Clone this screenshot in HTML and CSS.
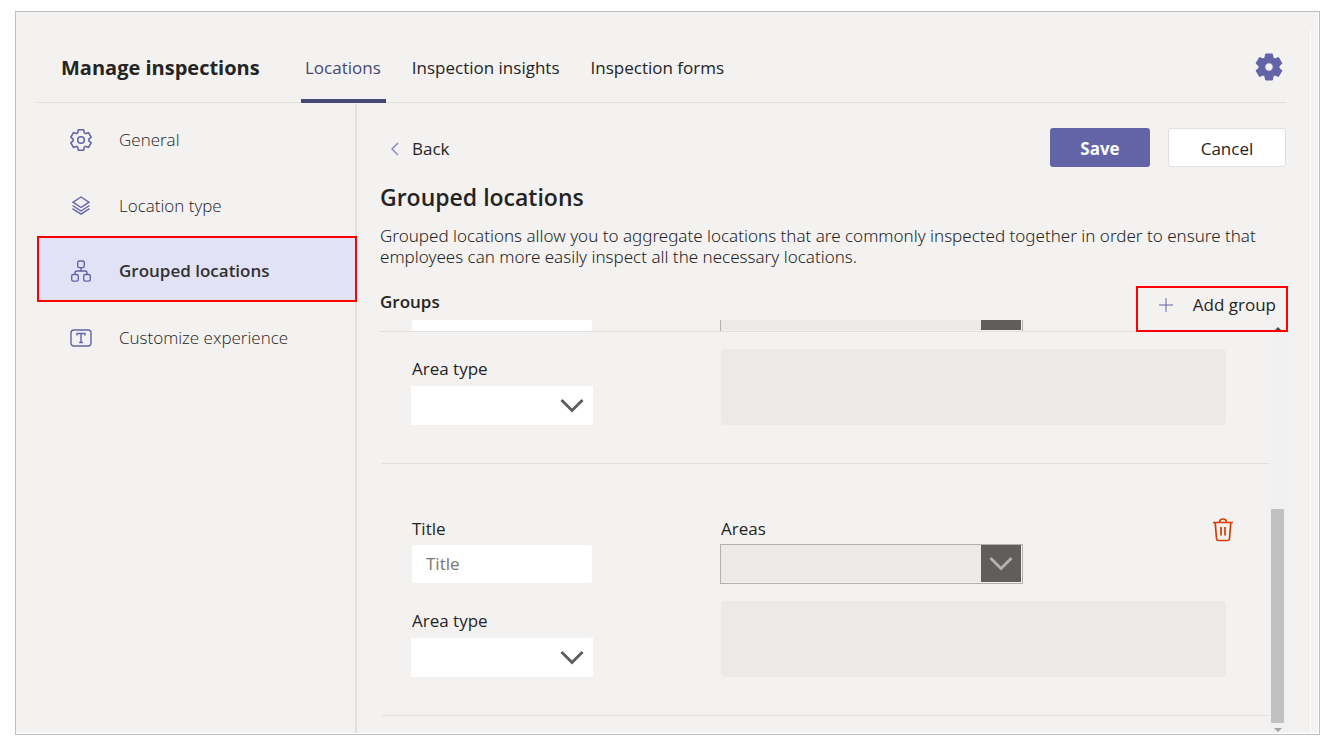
FILE: index.html
```html
<!DOCTYPE html>
<html lang="en">
<head>
<meta charset="utf-8">
<title>Manage inspections</title>
<link rel="stylesheet" href="styles.css">
</head>
<body>
<svg class="defs" width="0" height="0" aria-hidden="true">
  <symbol id="gear" viewBox="-14 -14 28 28">
    <path stroke-linejoin="round" d="M-4.1-9.2-3.4-13H3.4L4.1-9.2 5.9-8.100 9.56-9.45 12.96-3.55 10-1.050V1.050L12.96 3.55 9.56 9.45 5.9 8.100 4.1 9.2 3.4 13H-3.4L-4.1 9.2-5.9 8.100-9.56 9.45-12.96 3.55-10 1.050V-1.050L-12.96-3.55-9.56-9.45-5.9-8.100Z"/>
    <circle class="hub" r="4.2"/>
  </symbol>
  <symbol id="chevron" viewBox="0 0 24 16"><path d="M1.5 2 12 12.5 22.500 2"/></symbol>
</svg>
<div class="window">
  <div class="app">
    <header class="header">
      <h1 class="brand">Manage inspections</h1>
      <nav class="tabs">
        <a class="tab tab-active" href="#">Locations</a>
        <a class="tab" href="#">Inspection insights</a>
        <a class="tab" href="#">Inspection forms</a>
      </nav>
      <button class="settings" type="button" aria-label="Settings"><svg class="gear-solid"><use href="#gear"/></svg></button>
    </header>
    <div class="body">
      <nav class="sidebar">
        <a class="side-item" href="#"><svg class="side-icon gear-line"><use href="#gear"/></svg>General</a>
        <a class="side-item" href="#">
          <svg class="side-icon" viewBox="0 0 22 22"><path d="M11 2 19 7.200 11 12.500 3 7.200ZM2.500 10.500 11 16 19.500 10.500M2.500 13.700 11 19.200 19.500 13.700"/></svg>Location type</a>
        <a class="side-item side-active" href="#">
          <svg class="side-icon" viewBox="0 0 22 22"><rect x="7.700" y="1" width="6.600" height="6.600" rx="1.500"/><rect x="1.700" y="14.500" width="6.600" height="6.600" rx="1.500"/><rect x="13.700" y="14.500" width="6.600" height="6.600" rx="1.500"/><path d="M11 7.600V11M5 14.500V13q0-2 2-2H15q2 0 2 2V14.500"/></svg>Grouped locations</a>
        <a class="side-item" href="#">
          <svg class="side-icon" viewBox="0 0 22 22"><rect x="1" y="3" width="20" height="16" rx="3"/><path d="M7 8.500V6.500H15V8.500M11 6.500V15.500M9 15.500H13"/></svg>Customize experience</a>
      </nav>
      <main class="main">
        <div class="toolbar">
          <button class="back" type="button"><svg class="back-icon" viewBox="0 0 8 14"><path d="M7 1 1 7 7 13"/></svg>Back</button>
          <button class="btn btn-save" type="button">Save</button>
          <button class="btn btn-cancel" type="button">Cancel</button>
        </div>
        <h2 class="title">Grouped locations</h2>
        <p class="desc">Grouped locations allow you to aggregate locations that are commonly inspected together in order to ensure that employees can more easily inspect all the necessary locations.</p>
        <div class="groups-head">
          <h3 class="groups-title">Groups</h3>
          <button class="add" type="button"><svg class="plus" viewBox="0 0 14 14"><path d="M7 0V14M0 7H14"/></svg>Add group</button>
        </div>
        <div class="scroller">
          <div class="list">
            <div class="cut">
              <input class="text" type="text" aria-label="Group title">
              <div class="combo"><input class="combo-input" type="text" aria-label="Group areas" disabled><button class="combo-btn" type="button" aria-label="Open areas"></button></div>
            </div>
            <section class="group">
              <div class="row">
                <div class="type">
                  <label class="label" for="type1">Area type</label>
                  <div class="select-wrap"><select class="select" id="type1"></select><svg class="caret"><use href="#chevron"/></svg></div>
                </div>
                <div class="panel"></div>
              </div>
            </section>
            <section class="group">
              <div class="row row-top">
                <div>
                  <label class="label" for="title2">Title</label>
                  <input class="text" id="title2" type="text" placeholder="Title">
                </div>
                <div class="areas">
                  <div>
                    <label class="label" for="areas2">Areas</label>
                    <div class="combo"><input class="combo-input" id="areas2" type="text" disabled><button class="combo-btn" type="button" aria-label="Open areas"><svg class="combo-caret"><use href="#chevron"/></svg></button></div>
                  </div>
                  <button class="trash" type="button" aria-label="Delete group"><svg class="trash-icon" viewBox="0 0 20 24"><path d="M0 4.500H20M6.500 4.500Q6.500 1 10 1T13.500 4.500M2.200 4.500 3.500 20.500Q3.700 22.500 5.500 22.500H14.500Q16.300 22.500 16.500 20.500L17.800 4.500M8 9V17.500M12 9V17.500"/></svg></button>
                </div>
              </div>
              <div class="row">
                <div class="type">
                  <label class="label" for="type2">Area type</label>
                  <div class="select-wrap"><select class="select" id="type2"></select><svg class="caret"><use href="#chevron"/></svg></div>
                </div>
                <div class="panel"></div>
              </div>
            </section>
          </div>
          <div class="scrollbar">
            <span class="arrow arrow-up"></span>
            <span class="thumb"></span>
            <span class="arrow arrow-down"></span>
          </div>
        </div>
      </main>
    </div>
  </div>
</div>
</body>
</html>
```

FILE: styles.css
```css
* { box-sizing: border-box; }
body {
  margin: 0;
  min-height: 100vh;
  padding: 11px 13px 9px 15px;
  display: flex;
  background: #fff;
  color: #252423;
  font: 17px/24px "Open Sans", "Noto Sans", sans-serif;
}
button, input, select { font: inherit; color: inherit; margin: 0; border: 0; border-radius: 0; padding: 0; background: none; }
h1, h2, h3, p { margin: 0; }
a { color: inherit; text-decoration: none; }
svg { fill: none; display: block; }
.defs { position: absolute; }
.window {
  flex: 1;
  min-width: 0;
  display: flex;
  border: 1px solid #bebebe;
  padding: 0 1px 1px 0;
  background: linear-gradient(#f3f2f1, #f3f2f1) content-box, #fff;
}
.app {
  flex: 1;
  min-width: 0;
  display: flex;
  flex-direction: column;
  margin-right: 7px;
  padding: 0 24px 0 21px;
  border-right: 1px solid #fff;
  border-image: linear-gradient(transparent 19px, #fff 19px) 1;
}
.header { display: flex; height: 91px; border-bottom: 1px solid #e1dfdd; padding: 0 3px 0 24px; }
.brand { width: 240px; padding-top: 43px; font-size: 20px; line-height: 26px; font-weight: 700; white-space: nowrap; }
.tabs { display: flex; gap: 22px; margin-bottom: -1px; }
.tab { padding: 44px 5px 0 4px; border-bottom: 4px solid transparent; white-space: nowrap; }
.tab-active { color: #464775; border-bottom-color: #464775; }
.settings { margin-left: auto; align-self: flex-start; padding-top: 41px; }
.gear-solid { width: 28px; height: 28px; fill: #6264a7; stroke: #6264a7; --hub: #f3f2f1; }
.hub { fill: var(--hub, none); }
.body { flex: 1; display: flex; padding-top: 1px; }
.sidebar { width: 320px; flex: none; border-right: 2px solid #e1dfdd; }
.side-item { display: flex; align-items: center; gap: 27px; height: 66px; padding: 5px 0 0 33px; font-weight: 300; }
.side-icon { width: 22px; height: 22px; stroke: #6264a7; stroke-width: 1.4; }
.gear-line { stroke-width: 2; }
.side-active { margin-right: -2px; background: #e2e2f6; border: 2px solid #f00; padding: 4px 0 0 31px; font-weight: 600; color: #323130; }
.main { flex: 1; min-width: 0; padding: 24px 0 0 23px; display: flex; flex-direction: column; }
.toolbar { display: flex; align-items: center; gap: 18px; }
.back { display: flex; align-items: center; gap: 13px; margin: 2px auto 0 11px; }
.back-icon { width: 8px; height: 14px; stroke: #8b8cc7; stroke-width: 1.500; }
.btn { height: 39px; border-radius: 3px; padding: 2px 0 0; }
.btn-save { width: 100px; background: #6264a7; color: #fff; font-weight: 700; }
.btn-cancel { width: 118px; background: #fff; border: 1px solid #e1dfdd; }
.title { margin-top: 14px; font-size: 23px; line-height: 32px; font-weight: 600; }
.desc { margin-top: 12px; font-family: "Noto Sans", "Open Sans", sans-serif; line-height: 21px; font-weight: 300; }
.groups-head { display: flex; justify-content: space-between; margin: 19px -2px 0 0; height: 34px; }
.groups-title { padding-top: 4px; font-size: 17px; font-weight: 600; }
.add { position: relative; z-index: 1; display: flex; align-items: center; gap: 20px; padding: 4px 12px 0 23px; }
.add::after { content: ""; position: absolute; inset: 0 0 -12px; border: 2px solid #f00; }
.plus { width: 14px; height: 14px; stroke: #6264a7; }
.scroller { flex: 1; display: flex; }
.list { flex: 1; min-width: 0; padding-bottom: 17px; }
.cut, .row { display: grid; grid-template-columns: 182px 1fr; column-gap: 127px; padding-left: 31px; }
.cut { height: 12px; overflow: hidden; align-items: end; align-content: end; border-bottom: 1px solid #e1dfdd; }
.cut .combo { margin-bottom: -1px; }
.group { margin-left: 2px; padding: 17px 36px 38px 0; border-bottom: 1px solid #e1dfdd; }
.row { padding-left: 29px; }
.row-top { padding: 36px 0 17px 29px; }
.label { display: block; padding-left: 1px; }
.type { padding-top: 8px; }
.text { display: block; width: 180px; height: 38px; margin: 4px 1px 0; padding: 0 14px 2px; border-radius: 3px; background: #fff; }
.cut .text { margin: 0 1px; }
.text::placeholder { color: #797775; opacity: 1; }
.select-wrap { position: relative; margin-top: 5px; }
.select { display: block; appearance: none; width: 100%; height: 39px; padding: 0 40px 0 14px; background: #fff; }
.caret { position: absolute; right: 9px; top: 12px; width: 24px; height: 16px; stroke: #605e5c; stroke-width: 3; pointer-events: none; }
.panel { height: 76px; margin: 0 7px 0 1px; border-radius: 4px; background: #ebeae9; }
.areas { display: flex; justify-content: space-between; align-items: flex-start; }
.combo { display: flex; width: 303px; height: 40px; border: 1px solid #b3b0ad; padding: 0 1px 1px 0; }
.areas .combo { margin-top: 3px; }
.combo-input { flex: 1; min-width: 0; background: #ebeae9; }
.combo-btn { display: grid; place-items: center; width: 40px; background: #605e5c; }
.combo-caret { width: 24px; height: 16px; stroke: #b3b0ad; stroke-width: 3; }
.trash { margin-top: 1px; }
.trash-icon { width: 20px; height: 24px; stroke: #d83b01; stroke-width: 1.700; }
.scrollbar { width: 17px; display: flex; flex-direction: column; align-items: center; padding: 7px 0 1px; background: #f1f1f1; }
.arrow { border: 4px solid transparent; border-top-width: 0; border-bottom: 4px solid #505050; }
.arrow-down { border-top: 4px solid #a3a3a3; border-bottom-width: 0; margin-top: 5px; }
.thumb { width: 13px; height: 214px; margin-top: auto; background: #c1c1c1; }
```
